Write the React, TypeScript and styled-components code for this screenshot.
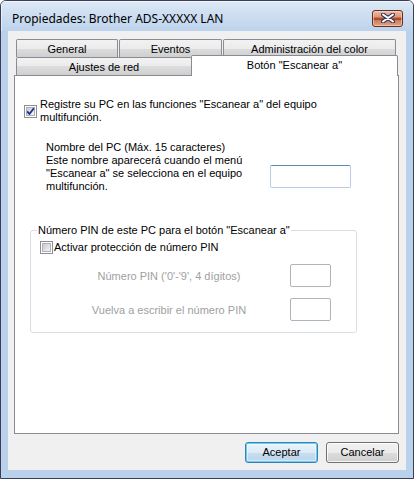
import React from 'react';
import styled, { createGlobalStyle, css } from 'styled-components';

const GlobalStyle = createGlobalStyle`
  html, body { margin: 0; padding: 0; background: #ffffff; }
  body {
    font-family: "Liberation Sans", Arial, sans-serif;
    font-size: 11px;
    color: #000;
  }
  * { box-sizing: border-box; }
`;

const Window = styled.div`
  width: 414px;
  height: 479px;
  border: 1px solid #3b3e58;
  border-radius: 6px 6px 0 0;
  background: #b9d1ea;
  display: flex;
  flex-direction: column;
  overflow: hidden;
`;

const TitleBar = styled.div`
  height: 30px;
  flex: none;
  display: flex;
  align-items: center;
  justify-content: space-between;
  padding: 4px 10px 0 11px;
  background: linear-gradient(to bottom, #dde9f6 0%, #cadcf0 55%, #bdd3ec 100%);
  box-shadow: inset 1px 1px 0 rgba(255, 255, 255, 0.55);
`;

const Title = styled.span`
  font-family: "Noto Sans", "Open Sans", sans-serif;
  font-size: 12px;
  color: #000;
  white-space: nowrap;
`;

const CloseButton = styled.button`
  width: 31px;
  height: 17px;
  padding: 0;
  border: 1px solid #5e2f24;
  border-radius: 3px;
  background: linear-gradient(
    to bottom,
    #eebba2 0%,
    #dd9474 42%,
    #b5502e 45%,
    #a9452a 58%,
    #d07b58 62%,
    #e3a283 100%
  );
  box-shadow: inset 0 0 0 1px rgba(255, 225, 205, 0.55);
  display: flex;
  align-items: center;
  justify-content: center;
`;

const Client = styled.div`
  flex: none;
  height: 439px;
  margin: 0 7px;
  background: #f0f0f0;
  padding: 8px 7px 0 6px;
  display: flex;
  flex-direction: column;
`;

const TabRow = styled.div`
  display: flex;
  align-items: flex-end;
  height: 18px;
  margin-left: 2px;
`;

const Tab = styled.div<{ $w: number; $selected?: boolean; $gap?: number }>`
  width: ${(p) => p.$w}px;
  height: 18px;
  margin-left: ${(p) => p.$gap ?? 0}px;
  border: 1px solid #898c95;
  border-bottom: none;
  border-radius: 2px 2px 0 0;
  background: linear-gradient(to bottom, #f2f2f2 0%, #ebebeb 50%, #dddddd 50%, #cfcfcf 100%);
  display: flex;
  align-items: center;
  justify-content: center;
  white-space: nowrap;
  flex: none;
  ${(p) =>
    p.$selected &&
    css`
      position: relative;
      z-index: 2;
      height: 21px;
      margin-bottom: -1px;
      background: #ffffff;
      padding-bottom: 3px;
    `}
`;

const Panel = styled.div`
  height: 359px;
  border: 1px solid #898c95;
  background: #ffffff;
  padding-top: 22px;
  display: flex;
  flex-direction: column;
`;

const CheckRow = styled.div<{ $indent: number; $top: number; $gap: number }>`
  display: flex;
  align-items: center;
  gap: ${(p) => p.$gap}px;
  margin-left: ${(p) => p.$indent}px;
  margin-top: ${(p) => p.$top}px;
  line-height: 13px;
  white-space: nowrap;
`;

const NameBlock = styled.div`
  display: flex;
  margin: 17px 0 0 31px;
`;

const NameText = styled.div`
  width: 224px;
  line-height: 13px;
  white-space: nowrap;
`;

const NameInput = styled.div`
  width: 81px;
  height: 23px;
  margin-top: 24px;
  border: 1px solid #b6cde4;
  border-top-color: #5b8cb8;
  border-radius: 2px;
  background: #ffffff;
`;

const GroupBox = styled.fieldset`
  margin: 31px 0 0 15px;
  width: 327px;
  min-width: 0;
  padding: 0 0 11px 0;
  border: 1px solid #d5dfe5;
  border-radius: 3px;
`;

const Legend = styled.legend`
  margin-left: 6px;
  padding: 0 1px;
  line-height: 13px;
  color: #000;
  white-space: nowrap;
`;

const PinRow = styled.div<{ $top: number }>`
  display: flex;
  align-items: center;
  margin-top: ${(p) => p.$top}px;
  padding-left: 23px;
`;

const PinLabel = styled.span`
  width: 230px;
  text-align: center;
  color: #a0a0a0;
  white-space: nowrap;
`;

const PinInput = styled.div`
  width: 41px;
  height: 23px;
  margin-left: 6px;
  border: 1px solid #b1b4b8;
  border-radius: 2px;
  background: #ffffff;
`;

const ButtonBar = styled.div`
  display: flex;
  justify-content: flex-end;
  gap: 8px;
  margin-top: 8px;
`;

const DialogButton = styled.button<{ $default?: boolean }>`
  width: 73px;
  height: 21px;
  padding: 0 0 1px;
  font-family: "Liberation Sans", Arial, sans-serif;
  font-size: 11px;
  color: #000;
  border: 1px solid #707070;
  border-radius: 3px;
  background: linear-gradient(to bottom, #f2f2f2 0%, #ebebeb 50%, #dddddd 50%, #cfcfcf 100%);
  box-shadow: inset 0 0 0 1px rgba(255, 255, 255, 0.8);
  ${(p) =>
    p.$default &&
    css`
      border-color: #3c7fb1;
      background: linear-gradient(to bottom, #eaf4fb 0%, #dcebf6 50%, #c9def0 50%, #bcd5ea 100%);
      box-shadow: inset 0 0 0 1px #62d0f8, inset 0 0 0 2px rgba(255, 255, 255, 0.4);
    `}
`;

const CheckIcon: React.FC<{ checked?: boolean; id: string }> = ({ checked, id }) => (
  <svg width="13" height="13" viewBox="0 0 13 13" style={{ flex: 'none' }}>
    <defs>
      <linearGradient id={id} x1="0" y1="0" x2="1" y2="1">
        <stop offset="0" stopColor="#c4c8ce" />
        <stop offset="1" stopColor="#f7f7f7" />
      </linearGradient>
    </defs>
    <rect x="0.5" y="0.5" width="12" height="12" fill="#ffffff" stroke="#8f8f8f" />
    <rect x="2.5" y="2.5" width="8" height="8" fill={`url(#${id})`} stroke="#aeb2b8" />
    {checked && (
      <path d="M3.2 6.4 L5.4 9 L9.9 3.2" fill="none" stroke="#1f2e8a" strokeWidth="1.8" strokeLinejoin="round" />
    )}
  </svg>
);

const CloseGlyph = () => (
  <svg width="14" height="10" viewBox="0 0 14 10">
    <path d="M2 1.5 L12 8.5 M12 1.5 L2 8.5" stroke="#2c3566" strokeWidth="4" strokeLinecap="round" />
    <path d="M2 1.5 L12 8.5 M12 1.5 L2 8.5" stroke="#ffffff" strokeWidth="2" strokeLinecap="round" />
  </svg>
);

export default function App() {
  return (
    <>
      <GlobalStyle />
      <Window>
        <TitleBar>
          <Title>Propiedades: Brother ADS-XXXXX LAN</Title>
          <CloseButton aria-label="Cerrar">
            <CloseGlyph />
          </CloseButton>
        </TitleBar>
        <Client>
          <TabRow>
            <Tab $w={102}>General</Tab>
            <Tab $w={103} $gap={1}>Eventos</Tab>
            <Tab $w={173} $gap={1}>Administración del color</Tab>
          </TabRow>
          <TabRow>
            <Tab $w={176}>Ajustes de red</Tab>
            <Tab $w={207} $gap={-1} $selected>
              Botón "Escanear a"
            </Tab>
          </TabRow>
          <Panel>
            <CheckRow $indent={9} $top={0} $gap={3}>
              <CheckIcon checked id="cb1" />
              <span>
                Registre su PC en las funciones "Escanear a" del equipo
                <br />
                multifunción.
              </span>
            </CheckRow>
            <NameBlock>
              <NameText>
                Nombre del PC (Máx. 15 caracteres)
                <br />
                Este nombre aparecerá cuando el menú
                <br />
                "Escanear a" se selecciona en el equipo
                <br />
                multifunción.
              </NameText>
              <NameInput />
            </NameBlock>
            <GroupBox>
              <Legend>Número PIN de este PC para el botón "Escanear a"</Legend>
              <CheckRow $indent={9} $top={4} $gap={1}>
                <CheckIcon id="cb2" />
                <span>Activar protección de número PIN</span>
              </CheckRow>
              <PinRow $top={10}>
                <PinLabel>Número PIN ('0'-'9', 4 dígitos)</PinLabel>
                <PinInput />
              </PinRow>
              <PinRow $top={11}>
                <PinLabel>Vuelva a escribir el número PIN</PinLabel>
                <PinInput />
              </PinRow>
            </GroupBox>
          </Panel>
          <ButtonBar>
            <DialogButton $default>Aceptar</DialogButton>
            <DialogButton>Cancelar</DialogButton>
          </ButtonBar>
        </Client>
      </Window>
    </>
  );
}
